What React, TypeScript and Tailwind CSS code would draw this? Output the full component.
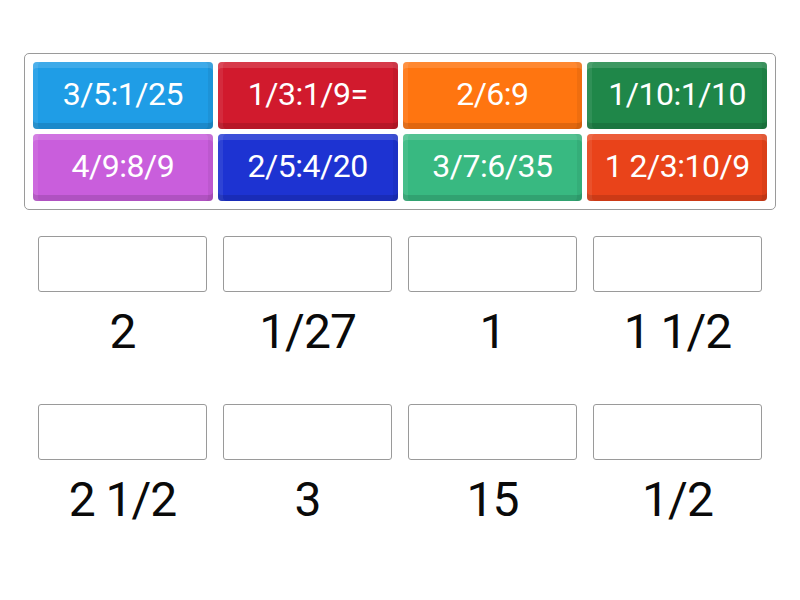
import React from 'react';

const tiles = [
  { label: '3/5:1/25', bg: 'bg-[#1f9de6]' },
  { label: '1/3:1/9=', bg: 'bg-[#d11a2d]' },
  { label: '2/6:9', bg: 'bg-[#ff7510]' },
  { label: '1/10:1/10', bg: 'bg-[#1f8749]' },
  { label: '4/9:8/9', bg: 'bg-[#c95edc]' },
  { label: '2/5:4/20', bg: 'bg-[#1d33d2]' },
  { label: '3/7:6/35', bg: 'bg-[#38b981]' },
  { label: '1 2/3:10/9', bg: 'bg-[#e9431a]' },
];

const answers = ['2', '1/27', '1', '1 1/2', '2 1/2', '3', '15', '1/2'];

export default function App() {
  return (
    <div className="w-[800px] h-[600px] bg-white overflow-hidden font-['Roboto','Liberation_Sans',sans-serif]">
      {/* tile bank */}
      <div className="ml-[24px] mt-[53px] w-[752px] h-[157px] border border-[#9a9a9a] rounded-[5px] p-[8px]">
        <div className="grid grid-cols-4 gap-x-[5px] gap-y-[5px]">
          {tiles.map((t) => (
            <div
              key={t.label}
              className={`${t.bg} h-[67px] rounded-[4px] flex items-center justify-center text-white text-[32px] leading-none tracking-[-0.5px] shadow-[inset_0_6px_0_rgba(255,255,255,0.14),inset_0_-6px_0_rgba(0,0,0,0.12),inset_5px_0_0_rgba(255,255,255,0.08),inset_-5px_0_0_rgba(0,0,0,0.06)]`}
            >
              <span className="pb-[3px]">{t.label}</span>
            </div>
          ))}
        </div>
      </div>

      {/* drop targets */}
      <div className="px-[38px] mt-[26px] grid grid-cols-4 gap-x-[16px]">
        {answers.map((a) => (
          <div key={a} className="h-[168px] flex flex-col">
            <div className="h-[56px] border border-[#9a9a9a] rounded-[3px]" />
            <div className="mt-[14px] h-[52px] flex items-center justify-center text-[48px] leading-none tracking-[-1px] text-[#0a0a0a]">
              {a}
            </div>
          </div>
        ))}
      </div>
    </div>
  );
}
